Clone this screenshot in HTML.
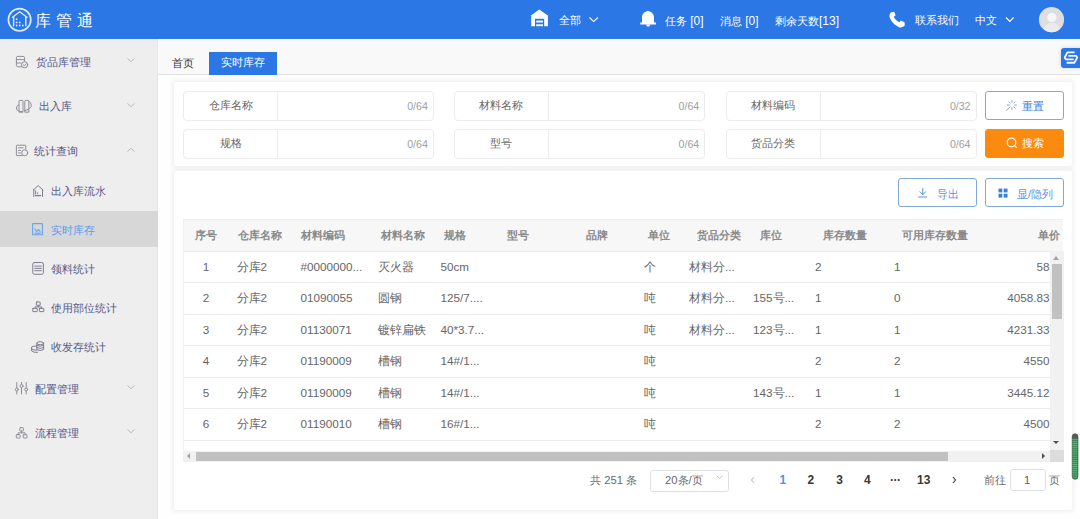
<!DOCTYPE html>
<html><head><meta charset="utf-8">
<style>
*{box-sizing:border-box;margin:0;padding:0}
html,body{width:1080px;height:519px;overflow:hidden;background:#f3f3f4;font-family:"Liberation Sans",sans-serif;font-size:11.25px;color:#333}
.abs{position:absolute}
.txt{position:absolute;white-space:nowrap;line-height:1}
#hdr{position:absolute;left:0;top:0;width:1080px;height:38.5px;background:#2b77e5;color:#fff}
#side{position:absolute;left:0;top:38.5px;width:158px;height:481px;background:#eeeeee;border-right:1px solid #e6e6e6}
#main{position:absolute;left:158px;top:38.5px;width:922px;height:481px;background:#fefefe}
.card{position:absolute;background:#fff;box-shadow:0 0 4px 1.5px rgba(0,0,0,.055);border-radius:2px}
.fld{position:absolute;width:251px;height:29.5px;border:1px solid #ededed;border-radius:4px;background:#fff}
.fld .lb{position:absolute;left:0;top:0;width:94.5px;height:27.5px;border-right:1px solid #ededed;text-align:center;line-height:27.5px;color:#666}
.fld .ct{position:absolute;right:5px;top:0.5px;line-height:27.5px;color:#a0a0a0;font-size:10.6px}
.btn{position:absolute;width:79px;height:28.5px;border:1px solid #7ea9da;border-radius:3px;background:#fff}
.bt{position:absolute;white-space:nowrap;line-height:1;color:#3a7fe0}
.si{position:absolute;white-space:nowrap;line-height:1;color:#54578a;font-weight:500}
.th{position:absolute;white-space:nowrap;line-height:1;color:#8a8a8a;font-weight:bold;font-size:11px}
.td{position:absolute;white-space:nowrap;line-height:1;color:#666;font-size:11.7px}
.rl{position:absolute;left:183px;width:867px;height:1px;background:#ebebeb}
.pg{position:absolute;white-space:nowrap;line-height:1;color:#383838;font-weight:bold;font-size:12px}
</style></head><body>
<!-- HEADER -->
<div id="hdr">
  <div class="txt" style="left:35px;top:12.8px;font-size:16px;letter-spacing:5.2px">库管通</div>
  <div class="txt" style="left:558.5px;top:14.8px;font-size:11.25px">全部</div>
  <div class="txt" style="left:665px;top:14.8px;font-size:11.25px">任务 <span style="font-size:12px">[0]</span></div>
  <div class="txt" style="left:720px;top:14.8px;font-size:11.25px">消息 <span style="font-size:12px">[0]</span></div>
  <div class="txt" style="left:775px;top:14.8px;font-size:11.25px">剩余天数<span style="font-size:12px">[13]</span></div>
  <div class="txt" style="left:914.5px;top:14.8px;font-size:11.25px">联系我们</div>
  <div class="txt" style="left:975px;top:14.8px;font-size:11.25px">中文</div>
</div>
<!-- SIDEBAR -->
<div id="side">
  <div class="abs" style="left:0;top:172.5px;width:157.5px;height:35.5px;background:#d7d7d7"></div>
</div>
<div class="si" style="left:35.5px;top:57px">货品库管理</div>
<div class="si" style="left:38.5px;top:101px">出入库</div>
<div class="si" style="left:34px;top:145.5px">统计查询</div>
<div class="si" style="left:51px;top:186px;font-weight:400;color:#585a88">出入库流水</div>
<div class="si" style="left:51px;top:225px;color:#5b9bf0;font-weight:400">实时库存</div>
<div class="si" style="left:51px;top:264px;font-weight:400;color:#585a88">领料统计</div>
<div class="si" style="left:51px;top:302.5px;font-weight:400;color:#585a88">使用部位统计</div>
<div class="si" style="left:51px;top:341.5px;font-weight:400;color:#585a88">收发存统计</div>
<div class="si" style="left:34.5px;top:383.5px">配置管理</div>
<div class="si" style="left:34.5px;top:427.5px">流程管理</div>
<!-- MAIN -->
<div id="main">
  <div class="abs" style="left:0;top:0;width:922px;height:36.5px;background:#f9f9f9;border-bottom:1px solid #e0e0e0"></div>
</div>
<div class="txt" style="left:172px;top:57.8px;color:#333">首页</div>
<div class="abs" style="left:209px;top:51.5px;width:68px;height:23.2px;background:#2b77e5"></div>
<div class="txt" style="left:221px;top:57px;color:#fff">实时库存</div>

<!-- SEARCH CARD -->
<div class="card" style="left:174px;top:82px;width:898px;height:84px"></div>
<div class="fld" style="left:182.8px;top:91px"><div class="lb">仓库名称</div><div class="ct">0/64</div></div>
<div class="fld" style="left:453.6px;top:91px;width:251.6px"><div class="lb">材料名称</div><div class="ct">0/64</div></div>
<div class="fld" style="left:725.5px;top:91px"><div class="lb">材料编码</div><div class="ct">0/32</div></div>
<div class="fld" style="left:182.8px;top:129px"><div class="lb">规格</div><div class="ct">0/64</div></div>
<div class="fld" style="left:453.6px;top:129px;width:251.6px"><div class="lb">型号</div><div class="ct">0/64</div></div>
<div class="fld" style="left:725.5px;top:129px"><div class="lb">货品分类</div><div class="ct">0/64</div></div>
<div class="btn" style="left:985px;top:91.3px"></div>
<div class="bt" style="left:1022px;top:101px">重置</div>
<div class="btn" style="left:985px;top:129px;background:#fb8a0e;border-color:#fb8a0e"></div>
<div class="bt" style="left:1022px;top:138px;color:#fff">搜索</div>

<!-- TABLE CARD -->
<div class="card" style="left:174px;top:170.5px;width:898px;height:339px"></div>
<div class="btn" style="left:898px;top:178px"></div>
<div class="bt" style="left:936.5px;top:188.5px;color:#5c96e0">导出</div>
<div class="btn" style="left:985px;top:178px"></div>
<div class="bt" style="left:1017px;top:188.5px;color:#5c96e0">显/隐列</div>
<div class="abs" style="left:183px;top:219px;width:880px;height:31.5px;background:#f7f7f8;border-top:1px solid #efefef"></div>
<div class="rl" style="top:250.5px"></div>
<div class="rl" style="top:282px"></div>
<div class="rl" style="top:313.5px"></div>
<div class="rl" style="top:345px"></div>
<div class="rl" style="top:376.5px"></div>
<div class="rl" style="top:408px"></div>
<div class="rl" style="top:439.5px"></div>
<div class="abs" style="left:183px;top:219px;width:1px;height:231px;background:#efefef"></div>
<!-- HEADER ROW -->
<div class="th" style="left:195px;top:229.9px">序号</div>
<div class="th" style="left:238px;top:229.9px">仓库名称</div>
<div class="th" style="left:301px;top:229.9px">材料编码</div>
<div class="th" style="left:381px;top:229.9px">材料名称</div>
<div class="th" style="left:444px;top:229.9px">规格</div>
<div class="th" style="left:507px;top:229.9px">型号</div>
<div class="th" style="left:586px;top:229.9px">品牌</div>
<div class="th" style="left:648px;top:229.9px">单位</div>
<div class="th" style="left:697px;top:229.9px">货品分类</div>
<div class="th" style="left:760px;top:229.9px">库位</div>
<div class="th" style="left:823px;top:229.9px">库存数量</div>
<div class="th" style="left:902px;top:229.9px">可用库存数量</div>
<div class="th" style="left:1038px;top:229.9px">单价</div>
<!-- ROWS -->
<div class="td" style="left:183px;width:46px;text-align:center;top:260.95px">1</div>
<div class="td" style="left:236.5px;top:260.95px">分库2</div>
<div class="td" style="left:300.5px;top:260.95px">#0000000...</div>
<div class="td" style="left:378px;top:260.95px">灭火器</div>
<div class="td" style="left:440.5px;top:260.95px">50cm</div>
<div class="td" style="left:643.5px;top:260.95px">个</div>
<div class="td" style="left:689px;top:260.95px">材料分...</div>
<div class="td" style="left:815px;top:260.95px">2</div>
<div class="td" style="left:894px;top:260.95px">1</div>
<div class="td" style="right:30.5px;top:260.95px">58</div>
<div class="td" style="left:183px;width:46px;text-align:center;top:292.45px">2</div>
<div class="td" style="left:236.5px;top:292.45px">分库2</div>
<div class="td" style="left:300.5px;top:292.45px">01090055</div>
<div class="td" style="left:378px;top:292.45px">圆钢</div>
<div class="td" style="left:440.5px;top:292.45px">125/7....</div>
<div class="td" style="left:643.5px;top:292.45px">吨</div>
<div class="td" style="left:689px;top:292.45px">材料分...</div>
<div class="td" style="left:753px;top:292.45px">155号...</div>
<div class="td" style="left:815px;top:292.45px">1</div>
<div class="td" style="left:894px;top:292.45px">0</div>
<div class="td" style="right:30.5px;top:292.45px">4058.83</div>
<div class="td" style="left:183px;width:46px;text-align:center;top:323.95px">3</div>
<div class="td" style="left:236.5px;top:323.95px">分库2</div>
<div class="td" style="left:300.5px;top:323.95px">01130071</div>
<div class="td" style="left:378px;top:323.95px">镀锌扁铁</div>
<div class="td" style="left:440.5px;top:323.95px">40*3.7...</div>
<div class="td" style="left:643.5px;top:323.95px">吨</div>
<div class="td" style="left:689px;top:323.95px">材料分...</div>
<div class="td" style="left:753px;top:323.95px">123号...</div>
<div class="td" style="left:815px;top:323.95px">1</div>
<div class="td" style="left:894px;top:323.95px">1</div>
<div class="td" style="right:30.5px;top:323.95px">4231.33</div>
<div class="td" style="left:183px;width:46px;text-align:center;top:355.45px">4</div>
<div class="td" style="left:236.5px;top:355.45px">分库2</div>
<div class="td" style="left:300.5px;top:355.45px">01190009</div>
<div class="td" style="left:378px;top:355.45px">槽钢</div>
<div class="td" style="left:440.5px;top:355.45px">14#/1...</div>
<div class="td" style="left:643.5px;top:355.45px">吨</div>
<div class="td" style="left:815px;top:355.45px">2</div>
<div class="td" style="left:894px;top:355.45px">2</div>
<div class="td" style="right:30.5px;top:355.45px">4550</div>
<div class="td" style="left:183px;width:46px;text-align:center;top:386.95px">5</div>
<div class="td" style="left:236.5px;top:386.95px">分库2</div>
<div class="td" style="left:300.5px;top:386.95px">01190009</div>
<div class="td" style="left:378px;top:386.95px">槽钢</div>
<div class="td" style="left:440.5px;top:386.95px">14#/1...</div>
<div class="td" style="left:643.5px;top:386.95px">吨</div>
<div class="td" style="left:753px;top:386.95px">143号...</div>
<div class="td" style="left:815px;top:386.95px">1</div>
<div class="td" style="left:894px;top:386.95px">1</div>
<div class="td" style="right:30.5px;top:386.95px">3445.12</div>
<div class="td" style="left:183px;width:46px;text-align:center;top:418.45px">6</div>
<div class="td" style="left:236.5px;top:418.45px">分库2</div>
<div class="td" style="left:300.5px;top:418.45px">01190010</div>
<div class="td" style="left:378px;top:418.45px">槽钢</div>
<div class="td" style="left:440.5px;top:418.45px">16#/1...</div>
<div class="td" style="left:643.5px;top:418.45px">吨</div>
<div class="td" style="left:815px;top:418.45px">2</div>
<div class="td" style="left:894px;top:418.45px">2</div>
<div class="td" style="right:30.5px;top:418.45px">4500</div>
<!-- V SCROLLBAR -->
<div class="abs" style="left:1050px;top:250.5px;width:13.6px;height:200px;background:#f1f1f1"></div>
<div class="abs" style="left:1051.5px;top:264px;width:10px;height:55px;background:#c1c1c1"></div>
<div class="abs" style="left:1053px;top:256px;width:0;height:0;border-left:3.5px solid transparent;border-right:3.5px solid transparent;border-bottom:4px solid #a3a3a3"></div>
<div class="abs" style="left:1053.3px;top:441.2px;width:0;height:0;border-left:3.5px solid transparent;border-right:3.5px solid transparent;border-top:3.6px solid #505050"></div>
<!-- H SCROLLBAR -->
<div class="abs" style="left:183px;top:450.5px;width:867px;height:11.5px;background:#f1f1f1"></div>
<div class="abs" style="left:196px;top:452px;width:752px;height:9px;background:#c1c1c1"></div>
<div class="abs" style="left:187px;top:453px;width:0;height:0;border-top:3px solid transparent;border-bottom:3px solid transparent;border-right:3.5px solid #a3a3a3"></div>
<div class="abs" style="left:1042px;top:453px;width:0;height:0;border-top:3px solid transparent;border-bottom:3px solid transparent;border-left:3.5px solid #505050"></div>
<div class="abs" style="left:1050px;top:450px;width:13.6px;height:12.4px;background:#dcdcdc"></div>
<!-- PAGINATION -->
<div class="txt" style="left:590px;top:475px;color:#6a6a6a">共 251 条</div>
<div class="abs" style="left:650px;top:470px;width:79px;height:22px;border:1px solid #dcdfe6;border-radius:3px"></div>
<div class="txt" style="left:665px;top:475px;color:#6a6a6a">20条/页</div>
<div class="pg" style="left:779.5px;top:474px;color:#4f94dc">1</div>
<div class="pg" style="left:807.5px;top:474px">2</div>
<div class="pg" style="left:836.3px;top:474px">3</div>
<div class="pg" style="left:864px;top:474px">4</div>
<div class="pg" style="left:890px;top:473.5px;letter-spacing:-0.5px">···</div>
<div class="pg" style="left:917px;top:474px">13</div>
<div class="txt" style="left:984px;top:475px;color:#6a6a6a">前往</div>
<div class="abs" style="left:1010px;top:469px;width:36px;height:22px;border:1px solid #dcdfe6;border-radius:3px"></div>
<div class="txt" style="left:1024px;top:475px;color:#606060">1</div>
<div class="txt" style="left:1049px;top:475px;color:#6a6a6a">页</div>

<!-- FLOAT ICON -->
<div class="abs" style="left:1061px;top:47.5px;width:24px;height:20.3px;background:#2b77e5;border-radius:3px;box-shadow:0 0 4px rgba(0,0,0,.15)"></div>

<!-- ICON OVERLAY -->
<svg class="abs" style="left:0;top:0" width="1080" height="519" viewBox="0 0 1080 519">
 <g fill="none" stroke="#dde9ff" stroke-width="1.4" stroke-linecap="round" stroke-linejoin="round">
  <circle cx="19.6" cy="19.8" r="11.2" stroke-width="1.7"/>
  <polyline points="12.5,17.3 19.7,11.8 27,17.3"/>
  <line x1="13.6" y1="16.6" x2="13.6" y2="25.8"/>
  <line x1="25.8" y1="16.6" x2="25.8" y2="25.8"/>
 </g>
 <g fill="#dde9ff">
  <circle cx="16.6" cy="19.2" r="0.9"/><circle cx="16.6" cy="22.4" r="0.9"/><circle cx="19.7" cy="22.4" r="0.9"/>
  <circle cx="16.6" cy="25.5" r="0.9"/><circle cx="19.7" cy="25.5" r="0.9"/><circle cx="22.8" cy="25.5" r="0.9"/>
 </g>
 <!-- warehouse -->
 <g fill="#fff">
  <path d="M530.3,15.9 L539.3,9.5 L548.5,15.9 L547.9,15.9 L547.9,26.2 L544.2,26.2 L544.2,18.8 L535,18.8 L535,26.2 L531.2,26.2 L531.2,15.9 Z"/>
  <rect x="536.2" y="20.6" width="6.8" height="1.9"/><rect x="536.2" y="24.3" width="6.8" height="1.9"/>
 </g>
 <!-- bell -->
 <g fill="#fff">
  <path d="M648,11 C644.5,11.5 642,14 642,17.5 L642,22.5 L640.3,22.5 L640.3,24.6 L656,24.6 L656,22.5 L654,22.5 L654,17.5 C654,14 651.5,11.5 648,11 Z"/>
  <path d="M646.1,24.6 A2.1,2.1 0 0 0 650.3,24.6 Z"/>
 </g>
 <!-- phone -->
 <path fill="#fff" d="M891.2,12.2 L894.2,11.8 L895.6,15.3 L893.8,16.8 C894.8,19 897,21.2 899.3,22.3 L900.8,20.6 L904.6,22.3 L904.8,25.6 C903,27.2 901,27.8 899.5,27.4 C895,25.5 891,21.5 889.6,17 C889.2,15 890,13 891.2,12.2 Z"/>
 <!-- header chevrons -->
 <g fill="none" stroke="#fff" stroke-width="1.1">
  <polyline points="589.5,17.5 593.7,21.6 597.9,17.5"/>
  <polyline points="1006,17.5 1009.8,21.4 1013.6,17.5"/>
 </g>
 <!-- avatar -->
 <circle cx="1051.5" cy="19.7" r="12.6" fill="#dedede"/>
 <circle cx="1051.8" cy="17.4" r="4.6" fill="#f7f7f7"/>
 <path d="M1043.5,29 C1045,24.5 1048,23 1051.8,23 C1055.6,23 1058.6,24.5 1060,29 C1057.8,31.3 1055,32.3 1051.8,32.3 C1048.5,32.3 1045.7,31.3 1043.5,29 Z" fill="#ebebeb"/>
 <!-- float S icon -->
 <g fill="none" stroke="#f4f8ff" stroke-width="1.85" stroke-linejoin="round">
  <path d="M1074.6,52.4 H1067.4 L1064.7,57.5 L1065.8,59.3 H1073.6"/>
  <path d="M1066.6,62.7 H1074.4 L1077.2,57.6 L1076.1,55.8 H1068.3"/>
 </g>
 <!-- sidebar icons -->
 <g fill="none" stroke="#8e8e98" stroke-width="1" stroke-linecap="round" stroke-linejoin="round">
  <!-- db -->
  <path d="M21.5,66.8 H17.8 Q16.4,66.8 16.4,65.4 V57.8 Q16.4,56.4 17.8,56.4 H23 Q24.6,56.4 24.6,57.8 V61"/>
  <line x1="16.6" y1="59.6" x2="24.4" y2="59.6"/><line x1="16.6" y1="63" x2="21" y2="63"/>
  <circle cx="24.6" cy="64.8" r="3.1"/><polyline points="23.2,64.8 24.3,65.8 26,63.9"/>
  <!-- in/out -->
  <path d="M19,111.8 V101.2 Q19,100.4 19.8,100.4 H22.2 Q23,100.4 23,101.2 V111.8 Z"/>
  <path d="M24.8,111.8 V101.2 Q24.8,100.4 25.6,100.4 H28 Q28.8,100.4 28.8,101.2 V111.8 Z"/>
  <path d="M29.5,101.5 Q32,104 31.2,106.5 Q29.5,109.5 25,110.8"/>
  <path d="M18.5,104.5 Q15.3,107 16.8,109.8 Q18.5,111.6 22,111.8"/>
  <!-- stat -->
  <path d="M22,155.6 H17 Q16.4,155.6 16.4,155 V145.8 Q16.4,145.2 17,145.2 H25.2 Q25.8,145.2 25.8,145.8 V149"/>
  <line x1="18.5" y1="147.8" x2="23" y2="147.8"/><line x1="18.5" y1="150.5" x2="20.5" y2="150.5"/><line x1="18.5" y1="153" x2="20.5" y2="153"/>
  <circle cx="24.7" cy="152.8" r="3"/>
  <!-- sliders -->
  <line x1="16.8" y1="382.5" x2="16.8" y2="394"/><line x1="21.5" y1="382.5" x2="21.5" y2="394"/><line x1="26.2" y1="382.5" x2="26.2" y2="394"/>
  <circle cx="16.8" cy="389.5" r="1.5" fill="#eee"/><circle cx="21.5" cy="386" r="1.5" fill="#eee"/><circle cx="26.2" cy="389.5" r="1.5" fill="#eee"/>
  <!-- flow -->
  <rect x="19.8" y="427.6" width="3.6" height="3.4" rx="0.6"/>
  <rect x="16.3" y="434.6" width="3.8" height="3.4" rx="0.6"/>
  <rect x="23.2" y="434.6" width="3.8" height="3.4" rx="0.6"/>
  <polyline points="18.2,434.6 18.2,432.8 25.1,432.8 25.1,434.6"/><line x1="21.6" y1="431" x2="21.6" y2="432.8"/>
 </g>
 <g fill="none" stroke="#7e7e8e" stroke-width="1" stroke-linecap="round" stroke-linejoin="round">
  <!-- house sub -->
  <polyline points="33.2,190 38.2,185.6 43,190"/>
  <line x1="33.8" y1="189.6" x2="33.8" y2="196.4"/><line x1="42.5" y1="189.6" x2="42.5" y2="196.4"/>
  <line x1="35.3" y1="195.6" x2="40.7" y2="195.6" stroke-width="1.2"/>
  <line x1="35.6" y1="190.8" x2="35.6" y2="193.8"/><line x1="37.6" y1="192.8" x2="37.6" y2="193.8"/>
  <!-- list doc -->
  <rect x="32.8" y="262.5" width="10.6" height="11.8" rx="1.6"/>
  <line x1="34.8" y1="266.1" x2="41.4" y2="266.1"/><line x1="34.8" y1="268.4" x2="41.4" y2="268.4"/><line x1="34.8" y1="270.7" x2="41.4" y2="270.7"/>
  <!-- hierarchy sub -->
  <rect x="36.4" y="302" width="3.8" height="3.3" rx="0.3"/>
  <rect x="32.8" y="308.4" width="4.4" height="3.2" rx="0.3"/>
  <rect x="39.4" y="308.4" width="4.4" height="3.2" rx="0.3"/>
  <polyline points="35,308.4 35,306.9 41.6,306.9 41.6,308.4"/><line x1="38.3" y1="305.3" x2="38.3" y2="306.9"/>
  <!-- coins -->
  <ellipse cx="40.2" cy="343.2" rx="3.4" ry="1.5"/>
  <path d="M36.8,343.2 V349.6 Q40.2,351.5 43.6,349.6 V343.2"/>
  <path d="M36.8,345.4 Q40.2,347.2 43.6,345.4"/><path d="M36.8,347.6 Q40.2,349.4 43.6,347.6"/>
  <path d="M36.6,346.2 Q33.4,345.6 31.6,347 V351 Q33.8,352.8 37.6,352.4"/><path d="M31.6,349 Q33.6,350.4 36.8,350.2"/>
 </g>
 <!-- active icon -->
 <g fill="none" stroke="#6aa2f2" stroke-width="1.1" stroke-linejoin="round">
  <rect x="32.6" y="223.6" width="9.8" height="11.2" rx="0.4"/>
  <polyline points="34.6,228.5 36.6,231.5 38.6,229.5 40.6,232.5"/>
  <line x1="34.6" y1="233.2" x2="40.6" y2="233.2"/>
 </g>
 <!-- sidebar chevrons -->
 <g fill="none" stroke="#b5b5bf" stroke-width="1">
  <polyline points="127.6,58.4 131,61.8 134.4,58.4"/>
  <polyline points="127.6,103.4 131,106.8 134.4,103.4"/>
  <polyline points="127.6,151.6 131,148.2 134.4,151.6"/>
  <polyline points="127.6,385.4 131,388.8 134.4,385.4"/>
  <polyline points="127.6,429.4 131,432.8 134.4,429.4"/>
 </g>
 <!-- reset icon (sparkle) -->
 <g stroke="#8ea2cc" stroke-width="1" stroke-linecap="round">
  <line x1="1014.60" y1="105.00" x2="1016.40" y2="105.00"/><line x1="1013.81" y1="106.91" x2="1015.08" y2="108.18"/><line x1="1011.90" y1="107.70" x2="1011.90" y2="109.50"/><line x1="1009.99" y1="106.91" x2="1006.53" y2="110.37"/><line x1="1009.20" y1="105.00" x2="1007.40" y2="105.00"/><line x1="1009.99" y1="103.09" x2="1008.72" y2="101.82"/><line x1="1011.90" y1="102.30" x2="1011.90" y2="100.50"/><line x1="1013.81" y1="103.09" x2="1015.08" y2="101.82"/>
 </g>
 <!-- search icon -->
 <g fill="none" stroke="#fff" stroke-width="1.2" stroke-linecap="round">
  <circle cx="1011.5" cy="142.5" r="4.3"/><line x1="1014.6" y1="145.6" x2="1016.4" y2="147.4"/>
 </g>
 <!-- export icon -->
 <g fill="none" stroke="#5c8fd6" stroke-width="1" stroke-linecap="round">
  <line x1="922.8" y1="188.5" x2="922.8" y2="194.5"/><polyline points="920,191.8 922.8,194.6 925.6,191.8"/><line x1="918.8" y1="197" x2="926.8" y2="197"/>
 </g>
 <!-- grid icon -->
 <g fill="#3a7fe0">
  <rect x="998.5" y="188.6" width="3.8" height="3.8"/><rect x="1003.7" y="188.6" width="3.8" height="3.8"/>
  <rect x="998.5" y="193.8" width="3.8" height="3.8"/><rect x="1003.7" y="193.8" width="3.8" height="3.8"/>
 </g>
 <!-- pagination arrows -->
 <g fill="none" stroke="#c0c4cc" stroke-width="1.1">
  <polyline points="754,477 751.5,480 754,483"/>
 </g>
 <g fill="none" stroke="#303133" stroke-width="1.1">
  <polyline points="953,477 955.5,480 953,483"/>
 </g>
 <g fill="none" stroke="#c0c4cc" stroke-width="1">
  <polyline points="716.8,475.8 719.6,478.6 722.4,475.8"/>
 </g>
 <!-- green bar -->
 <defs><pattern id="stp" x="0" y="0" width="6" height="2.1" patternUnits="userSpaceOnUse"><rect width="6" height="2.1" fill="#2f8a4e"/><rect y="0" width="6" height="0.9" fill="#58b878"/></pattern></defs>
 <rect x="1072.2" y="433.8" width="5.8" height="45.5" rx="2.9" fill="url(#stp)" stroke="#3e4a42" stroke-width="0.6"/>
 <path d="M1072.2,438.5 V436.7 A2.9,2.9 0 0 1 1078,436.7 V438.5 Z" fill="#5a5a5a"/>
</svg>
</body></html>
